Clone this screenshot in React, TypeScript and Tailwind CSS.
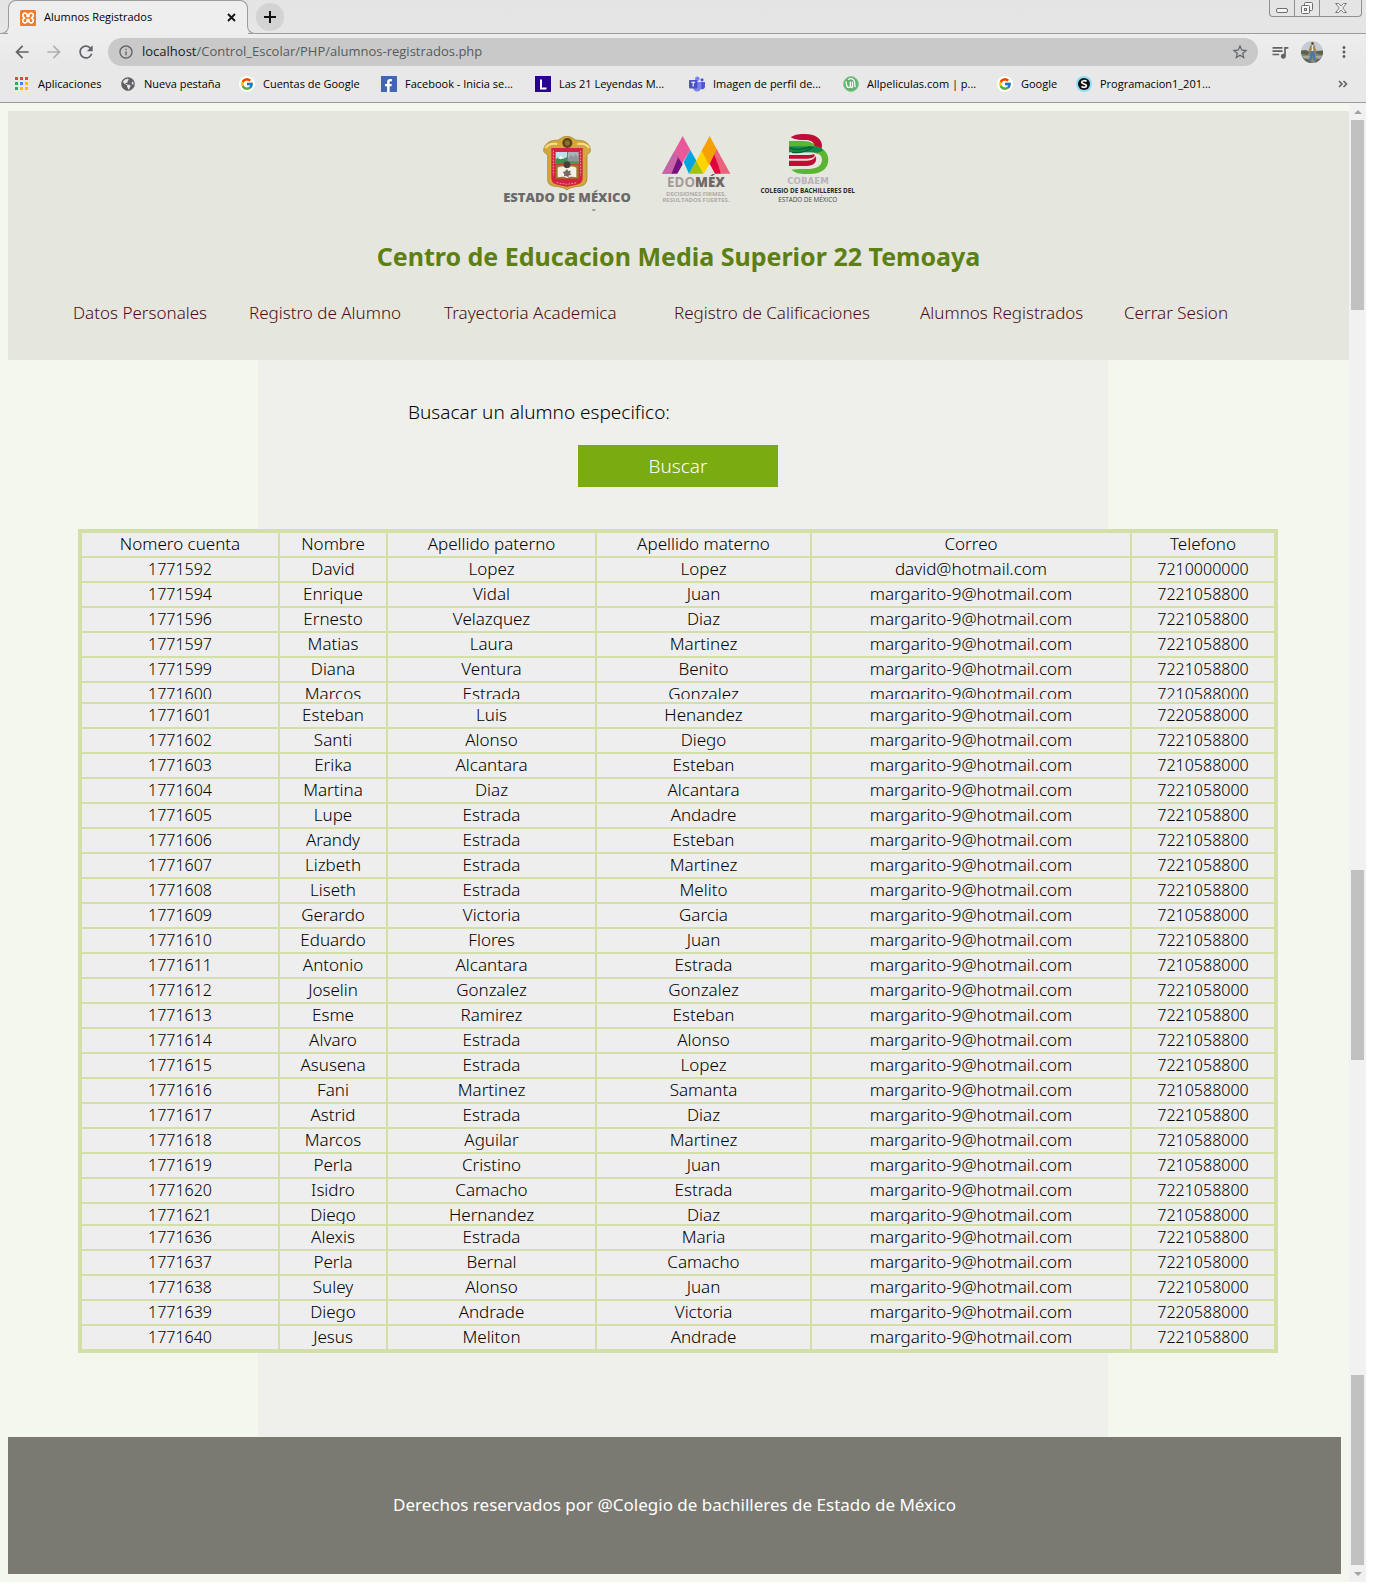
import React from "react";
import {
  MdArrowBack,
  MdArrowForward,
  MdRefresh,
  MdInfoOutline,
  MdStarBorder,
  MdQueueMusic,
  MdMoreVert,
} from "react-icons/md";
import { FcGoogle } from "react-icons/fc";
import { FaFacebookF, FaGlobeAmericas } from "react-icons/fa";

const MAIL = "margarito-9@hotmail.com";

type Row = [string, string, string, string, string, string];

const HEADINGS = ["Nomero cuenta", "Nombre", "Apellido paterno", "Apellido materno", "Correo", "Telefono"];

const ROWS: Row[] = [
  ["1771592", "David", "Lopez", "Lopez", "david@hotmail.com", "7210000000"],
  ["1771594", "Enrique", "Vidal", "Juan", MAIL, "7221058800"],
  ["1771596", "Ernesto", "Velazquez", "Diaz", MAIL, "7221058800"],
  ["1771597", "Matias", "Laura", "Martinez", MAIL, "7221058800"],
  ["1771599", "Diana", "Ventura", "Benito", MAIL, "7221058800"],
  ["1771600", "Marcos", "Estrada", "Gonzalez", MAIL, "7210588000"],
  ["1771601", "Esteban", "Luis", "Henandez", MAIL, "7220588000"],
  ["1771602", "Santi", "Alonso", "Diego", MAIL, "7221058800"],
  ["1771603", "Erika", "Alcantara", "Esteban", MAIL, "7210588000"],
  ["1771604", "Martina", "Diaz", "Alcantara", MAIL, "7221058000"],
  ["1771605", "Lupe", "Estrada", "Andadre", MAIL, "7221058800"],
  ["1771606", "Arandy", "Estrada", "Esteban", MAIL, "7221058800"],
  ["1771607", "Lizbeth", "Estrada", "Martinez", MAIL, "7221058800"],
  ["1771608", "Liseth", "Estrada", "Melito", MAIL, "7221058800"],
  ["1771609", "Gerardo", "Victoria", "Garcia", MAIL, "7210588000"],
  ["1771610", "Eduardo", "Flores", "Juan", MAIL, "7221058800"],
  ["1771611", "Antonio", "Alcantara", "Estrada", MAIL, "7210588000"],
  ["1771612", "Joselin", "Gonzalez", "Gonzalez", MAIL, "7221058000"],
  ["1771613", "Esme", "Ramirez", "Esteban", MAIL, "7221058800"],
  ["1771614", "Alvaro", "Estrada", "Alonso", MAIL, "7221058800"],
  ["1771615", "Asusena", "Estrada", "Lopez", MAIL, "7221058800"],
  ["1771616", "Fani", "Martinez", "Samanta", MAIL, "7210588000"],
  ["1771617", "Astrid", "Estrada", "Diaz", MAIL, "7221058800"],
  ["1771618", "Marcos", "Aguilar", "Martinez", MAIL, "7210588000"],
  ["1771619", "Perla", "Cristino", "Juan", MAIL, "7210588000"],
  ["1771620", "Isidro", "Camacho", "Estrada", MAIL, "7221058800"],
  ["1771621", "Diego", "Hernandez", "Diaz", MAIL, "7210588000"],
  ["1771636", "Alexis", "Estrada", "Maria", MAIL, "7221058800"],
  ["1771637", "Perla", "Bernal", "Camacho", MAIL, "7221058000"],
  ["1771638", "Suley", "Alonso", "Juan", MAIL, "7221058000"],
  ["1771639", "Diego", "Andrade", "Victoria", MAIL, "7220588000"],
  ["1771640", "Jesus", "Meliton", "Andrade", MAIL, "7221058800"],
];

/* Rows that are cut short where two stretches of the list meet. */
const CLIPPED: Record<string, string> = {
  "1771600": "h-4 mb-[3px]",
  "1771621": "h-5",
};

const NAV = [
  "Datos Personales",
  "Registro de Alumno",
  "Trayectoria Academica",
  "Registro de Calificaciones",
  "Alumnos Registrados",
  "Cerrar Sesion",
];

function XamppIcon() {
  return (
    <svg viewBox="0 0 16 16" className="size-4 shrink-0">
      <rect width="16" height="16" rx="1.500" fill="#ee7a2c" />
      <path
        d="M5.200 3.200a2.300 2.300 0 0 0-1 4.400l.3.400-.3.400a2.300 2.300 0 1 0 3 2.700V9.700h1.600v1.400a2.300 2.300 0 1 0 3-2.700l-.3-.4.3-.4a2.300 2.300 0 1 0-3-2.700v1.400H7.200V4.900a2.300 2.300 0 0 0-2-1.700z"
        fill="none"
        stroke="#fff"
        strokeWidth="1.700"
      />
    </svg>
  );
}

function AppsIcon() {
  const colors = ["#ea4335", "#ea4335", "#ea4335", "#34a853", "#4285f4", "#fbbc04", "#34a853", "#fbbc04", "#fbbc04"];
  return (
    <svg viewBox="0 0 16 16" className="size-4">
      {colors.map((c, i) => (
        <rect key={i} x={1 + (i % 3) * 5} y={1 + Math.floor(i / 3) * 5} width="3" height="3" fill={c} />
      ))}
    </svg>
  );
}

function GoogleIcon() {
  return (
    <span className="flex size-4 items-center justify-center rounded-full bg-white">
      <FcGoogle className="size-[14px]" />
    </span>
  );
}

function FacebookIcon() {
  return (
    <span className="flex size-4 items-end justify-end bg-[#4267b2] pr-[2px]">
      <FaFacebookF className="size-[13px] text-white" />
    </span>
  );
}

function LetterLIcon() {
  return (
    <svg viewBox="0 0 16 16" className="size-4">
      <rect width="16" height="16" fill="#2a0094" />
      <path d="M6 3.500v9h5.500" fill="none" stroke="#fff" strokeWidth="2" />
    </svg>
  );
}

function TeamsIcon() {
  return (
    <svg viewBox="0 0 16 16" className="size-4">
      <circle cx="8.300" cy="2.800" r="2.300" fill="#7b83eb" />
      <circle cx="13" cy="3.800" r="1.600" fill="#5059c9" />
      <path d="M11.500 6H16v4.500a2.600 2.600 0 0 1-4.500 1.800z" fill="#5059c9" />
      <path d="M5 6h7.300v5.300A4.200 4.200 0 0 1 8 15.600a4 4 0 0 1-3.600-2.400z" fill="#7b83eb" />
      <rect y="4" width="8.400" height="8.400" rx="0.800" fill="#4b53bc" />
      <path d="M2.200 6.300h4M4.200 6.300v4.200" stroke="#fff" strokeWidth="1.100" />
    </svg>
  );
}

function TorrentIcon() {
  return (
    <svg viewBox="0 0 16 16" className="size-4">
      <circle cx="8" cy="8" r="7.600" fill="#5fb26a" />
      <path
        d="M3 5.400c.5 4 .7 6.200 2.600 6.200s2-2.300 1.700-6M7.400 9.500c.4 1.800 1 2.400 2.100 1.900M5 3.800c3-2 5.600-1 6.300 1.200.7 2.100.2 4.500 1 6.100M9.200 5.600c.6 2 .3 4 .4 5.800"
        fill="none"
        stroke="#fff"
        strokeWidth="1.300"
      />
      <circle cx="8" cy="8" r="7.400" fill="none" stroke="#8cc893" strokeWidth="1" />
    </svg>
  );
}

function SIcon() {
  return (
    <svg viewBox="0 0 16 16" className="size-4">
      <circle cx="8" cy="8" r="8" fill="#8fdcf5" />
      <circle cx="8" cy="8" r="6" fill="#111" />
      <path
        d="M10.500 5.600C9.500 4.300 5.700 4.400 5.700 6.300c0 2 4.700 1.300 4.700 3.400 0 1.900-3.700 2-4.900.7"
        fill="none"
        stroke="#fff"
        strokeWidth="1.700"
      />
    </svg>
  );
}

const BOOKMARKS = [
  { label: "Aplicaciones", icon: <AppsIcon />, width: "w-[106px]" },
  { label: "Nueva pestaña", icon: <FaGlobeAmericas className="size-[14px] text-[#5f6368]" />, width: "w-[119px]" },
  { label: "Cuentas de Google", icon: <GoogleIcon />, width: "w-[142px]" },
  { label: "Facebook - Inicia se...", icon: <FacebookIcon />, width: "w-[154px]" },
  { label: "Las 21 Leyendas M...", icon: <LetterLIcon />, width: "w-[154px]" },
  { label: "Imagen de perfil de...", icon: <TeamsIcon />, width: "w-[154px]" },
  { label: "Allpeliculas.com | p...", icon: <TorrentIcon />, width: "w-[154px]" },
  { label: "Google", icon: <GoogleIcon />, width: "w-[79px]" },
  { label: "Programacion1_201...", icon: <SIcon />, width: "w-[154px]" },
];

function Avatar() {
  return (
    <svg viewBox="0 0 22 22" className="size-[22px]">
      <clipPath id="avatar">
        <circle cx="11" cy="11" r="11" />
      </clipPath>
      <g clipPath="url(#avatar)">
        <rect width="22" height="22" fill="#c3ccd6" />
        <path d="M0 10h22v12H0z" fill="#85897f" />
        <path d="M0 9.500 5 9l4 2-3 3-6-1zM14 10l8-.5V14l-6-1z" fill="#5d6248" />
        <path d="M2 15h7l-2 4H3zM14 15h7l-3 3z" fill="#a9aba3" />
        <path d="M0 17l8 1 3 4H0zM14 19l8-2v5h-8z" fill="#60665c" />
        <circle cx="11.500" cy="2.500" r="1.300" fill="#4a3328" />
        <path d="M9.500 4h4l2 7-1.500.5-.6-2h-4l-.9 2L7 11z" fill="#a68442" />
        <path d="M10.800 4h1.400v6h-1.400z" fill="#e8e4dc" />
        <path d="M9.500 10h4l.7 9h-2l-.7-5-.8 5h-2z" fill="#4a76a8" />
      </g>
    </svg>
  );
}

function WindowControls() {
  return (
    <div className="mr-1 flex h-[17px] rounded-b-[4px] border border-t-0 border-[#8f8f8f] text-[#6e6e6e]">
      <button aria-label="Minimizar" className="flex w-[25px] items-center justify-center border-r border-[#8f8f8f]">
        <svg viewBox="0 0 12 12" className="size-3">
          <rect x="0.500" y="6.500" width="11" height="4" rx="1.500" fill="#f4f4f4" stroke="currentColor" />
        </svg>
      </button>
      <button aria-label="Restaurar" className="flex w-[25px] items-center justify-center border-r border-[#8f8f8f]">
        <svg viewBox="0 0 14 14" className="size-[14px]">
          <rect x="4.500" y="1.500" width="8" height="8" rx="1" fill="#f4f4f4" stroke="currentColor" />
          <rect x="1.500" y="4.500" width="8" height="8" rx="1" fill="#f4f4f4" stroke="currentColor" />
          <rect x="4.500" y="7.500" width="2" height="2" fill="none" stroke="currentColor" />
        </svg>
      </button>
      <button aria-label="Cerrar" className="flex w-[41px] items-center justify-center">
        <svg viewBox="0 0 12 12" className="size-3">
          <path
            d="M.6 1.500h3L6 4l2.400-2.500h3L7.700 6l3.700 4.500h-3L6 8l-2.400 2.500h-3L4.300 6z"
            fill="#f4f4f4"
            stroke="currentColor"
            strokeWidth="0.900"
          />
        </svg>
      </button>
    </div>
  );
}

function BrowserBar() {
  return (
    <div className="bg-[#e8e8e8] font-['Open_Sans',sans-serif] text-[11px] text-black">
      <div className="flex h-[34px] items-start justify-between border-b border-[#9c9c9c] bg-linear-to-b from-[#e4e4e4] to-[#e6e6e6]">
        <div className="flex items-start">
          <div className="ml-2 w-60">
            <div className="flex h-[26px] items-center rounded-t-lg border border-b-0 border-[#9c9c9c] bg-[#eeeeee] px-[11px] pt-2">
              <XamppIcon />
              <span className="ml-2 flex-1 whitespace-nowrap">Alumnos Registrados</span>
              <button aria-label="Cerrar pestaña">
                <svg viewBox="0 0 9 9" className="size-[9px]">
                  <path d="m1 1 7 7M8 1 1 8" stroke="#111" strokeWidth="1.800" />
                </svg>
              </button>
            </div>
            <div className="relative h-2 bg-[#eeeeee]">
              <span className="absolute bottom-0 -left-2 size-[9px] rounded-br-lg border-r border-b border-[#9c9c9c] bg-[#e6e6e6]" />
              <span className="absolute -right-2 bottom-0 size-[9px] rounded-bl-lg border-b border-l border-[#9c9c9c] bg-[#e6e6e6]" />
            </div>
          </div>
          <button
            aria-label="Nueva pestaña"
            className="mt-[3px] ml-2 flex size-7 items-center justify-center rounded-full bg-[#d3d3d3]"
          >
            <svg viewBox="0 0 12 12" className="size-3">
              <path d="M6 0v12M0 6h12" stroke="#111" strokeWidth="2" />
            </svg>
          </button>
        </div>
        <WindowControls />
      </div>

      <div className="flex items-center bg-linear-to-b from-[#eeeeee] to-[#e8e8e8] pt-1 pl-3 text-[#5f6368]">
        <button aria-label="Atrás">
          <MdArrowBack className="size-5" />
        </button>
        <button aria-label="Adelante" className="ml-3 text-[#b0b0b0]">
          <MdArrowForward className="size-5" />
        </button>
        <button aria-label="Recargar" className="ml-3">
          <MdRefresh className="size-5" />
        </button>
        <div className="ml-3 flex h-7 flex-1 items-center rounded-full bg-[#c9c9c9] pr-[9px] pl-[10px]">
          <MdInfoOutline className="size-4" />
          <span className="ml-2 flex-1 text-[13px] text-[#57595c]">
            <span className="text-[#202124]">localhost</span>/Control_Escolar/PHP/alumnos-registrados.php
          </span>
          <button aria-label="Marcador">
            <MdStarBorder className="size-[18px]" />
          </button>
        </div>
        <button aria-label="Multimedia" className="ml-3">
          <MdQueueMusic className="size-5" />
        </button>
        <button aria-label="Perfil" className="ml-[11px]">
          <Avatar />
        </button>
        <button aria-label="Menú" className="mr-[13px] ml-3">
          <MdMoreVert className="size-[18px]" />
        </button>
      </div>

      <div className="flex h-[37px] items-center border-b border-[#9c9c9c] pl-[14px]">
        {BOOKMARKS.map((b) => (
          <a key={b.label} href="#" className={`flex items-center gap-2 whitespace-nowrap ${b.width}`}>
            <span className="flex size-4 shrink-0 items-center justify-center">{b.icon}</span>
            {b.label}
          </a>
        ))}
        <button aria-label="Más marcadores" className="mr-[18px] ml-auto">
          <svg viewBox="0 0 10 8" className="h-2 w-[10px]">
            <path d="m1 1 3 3-3 3M5.500 1l3 3-3 3" fill="none" stroke="#5f6368" strokeWidth="1.600" />
          </svg>
        </button>
      </div>
    </div>
  );
}

function EstadoLogo() {
  return (
    <svg viewBox="0 0 480 300" className="h-[100px] w-40" role="img" aria-label="Estado de México">
      <path
        d="M231 49c12 0 18 6 26 11 12 2 22 0 33 8 8 6 12 15 11 26-2 7-8 7-10 12v70c0 10-5 18-14 21-15 4-33 2-46 13-13-11-31-9-46-13-9-3-12-11-12-21v-70c-3-5-9-5-12-12-1-11 4-20 13-26 10-8 20-6 31-8 8-5 14-11 26-11z"
        fill="#d4a73a"
        stroke="#a07c2a"
        strokeWidth="2"
      />
      <path d="M166 84c8-12 22-14 36-12M298 84c-8-12-22-14-36-12" fill="none" stroke="#f5e08a" strokeWidth="6" />
      <path d="M184 84h94v88c0 14-6 20-18 22l-29 6-29-6c-12-2-18-8-18-22z" fill="#d0243f" />
      <path d="M190 92v74M272 92v74M200 188l31 5 31-5" fill="none" stroke="#f0a0a0" strokeWidth="3" strokeDasharray="5 4" />
      <circle cx="232" cy="69" r="15" fill="#5d4216" />
      <circle cx="232" cy="69" r="8" fill="#8b6d2c" />
      <path d="M197 96h34v36h-34z" fill="#bfe0ee" />
      <path d="M233 96h33v36h-33z" fill="#aab3b8" />
      <path d="m197 118 12-9 10 8 12-6v21h-34z" fill="#3e8e4f" />
      <path d="m203 114 8-7 8 7-7 4z" fill="#fff" />
      <path d="m233 116 10-12 8 7 6-9 9 14v16h-33z" fill="#8d979b" />
      <path d="M233 124h33v8h-33z" fill="#4a9a4e" />
      <path d="M197 134h69v42h-69z" fill="#9c7a2a" />
      <path d="M203 143c10-5 20-4 28 2 8-6 18-7 28-2v29c-10-3-20-3-28 2-8-5-18-5-28-2z" fill="#f3f0e8" />
      <circle cx="231" cy="134" r="10" fill="#4a4038" />
      <path d="m231 147 4 6 8-1-3 7 5 6-8 1-2 6-6-4-7 1 1-7-5-5 7-3z" fill="#7c6a62" />
      <text x="231" y="246" textAnchor="middle" fontSize="39" fill="#6a6a6a" className="font-['Open_Sans'] font-extrabold">
        ESTADO DE MÉXICO
      </text>
      <path d="M307 270h9" stroke="#555" strokeWidth="3" />
    </svg>
  );
}

function EdomexLogo() {
  return (
    <svg viewBox="480 0 300 300" className="size-[100px]" role="img" aria-label="Edomex">
      <path d="m516 161 37-67 22 20-28 47z" fill="#c565a8" />
      <path d="M578 48 553 94l22 39 26-43z" fill="#e65a9c" />
      <path d="m562 109 16 24-16 28h-18z" fill="#75107f" />
      <path d="m553 94 11 19-20 48h-28z" fill="#c565a8" />
      <path d="m601 90-20 36 16 35 22-39z" fill="#00a5df" />
      <path d="m619 122 22 39h-44z" fill="#9fc30c" />
      <path d="m635 92-16 30 22 39 18-30z" fill="#ffd400" />
      <path d="m659 48-24 44 22 42 25-44z" fill="#f5a104" />
      <path d="m680 87 41 74h-28l-20-60z" fill="#ea6379" />
      <path d="m673 103-14 28 16 30h18l-8-26z" fill="#e4003d" />
      <text x="618" y="201" textAnchor="middle" fontSize="40" className="font-['Open_Sans'] font-extrabold">
        <tspan fill="#a39b99" className="font-bold">EDO</tspan>
        <tspan fill="#6d6769">MÉX</tspan>
      </text>
      <text x="618" y="228" textAnchor="middle" fontSize="18" fill="#b0a9a7" className="font-['Open_Sans'] font-bold">
        DECISIONES FIRMES,
      </text>
      <text x="618" y="247" textAnchor="middle" fontSize="18" fill="#b0a9a7" className="font-['Open_Sans'] font-bold">
        RESULTADOS FUERTES.
      </text>
    </svg>
  );
}

function CobaemLogo() {
  return (
    <svg viewBox="780 0 420 300" className="h-[100px] w-[140px]" role="img" aria-label="Cobaem">
      <path d="M902 52c14-10 28-10 42-10 32 0 52 14 52 35 0 11-6 19-14 24l-24-12c10-2 14-6 14-12 0-12-12-17-28-17-16 0-30 0-42-8z" fill="#c10d33" />
      <path d="M897 63h36c22 0 36 4 42 15h-78z" fill="#5cb531" />
      <path d="M897 79h76c25 3 42 18 42 40 0 28-24 43-58 43-22 0-40-1-53-13 16-3 30-2 46-2 26 0 46-8 46-28 0-14-12-22-34-22h-65z" fill="#5cb531" />
      <path d="M897 79h76c12 1 20 5 27 11-8 8-20 9-36 7h-67z" fill="#0c8a4a" />
      <path d="M900 84c20 8 44 4 62-4M906 97c24 4 46-4 64-17" fill="none" stroke="#075b36" strokeWidth="4" />
      <path d="M897 105h54c10 0 16-1 22-3 4 8-6 14-20 14h-56z" fill="#c10d33" />
      <path d="M897 122h54c14 0 22-6 26-14 6 18-6 30-28 30h-52z" fill="#c10d33" />
      <text x="954" y="191" textAnchor="middle" fontSize="26" fill="#b9b3bb" className="font-['DejaVu_Sans'] font-bold">
        COBAEM
      </text>
      <text x="953" y="219" textAnchor="middle" fontSize="19" fill="#2a2a2a" className="font-['Open_Sans'] font-bold">
        COLEGIO DE BACHILLERES DEL
      </text>
      <text x="953" y="246" textAnchor="middle" fontSize="19" fill="#444" className="font-['Open_Sans'] font-normal">
        ESTADO DE MÉXICO
      </text>
    </svg>
  );
}

function Scrollbar() {
  return (
    <div aria-hidden="true" className="flex w-[17px] shrink-0 flex-col bg-[#f1f1f1] px-[2px]">
      <div className="flex h-[17px] items-center justify-center">
        <span className="border-x-[4px] border-b-[4px] border-x-transparent border-b-[#a3a3a3]" />
      </div>
      <div className="h-[190px] bg-[#c1c1c1]" />
      <div className="flex-[560]" />
      <div className="h-[190px] bg-[#c1c1c1]" />
      <div className="flex-[315]" />
      <div className="h-[190px] bg-[#c1c1c1]" />
      <div className="flex h-[17px] items-center justify-center">
        <span className="border-x-[4px] border-t-[4px] border-x-transparent border-t-[#a3a3a3]" />
      </div>
    </div>
  );
}

function StudentTable() {
  return (
    <table className="w-full table-fixed border-separate border-spacing-[2px] border-2 border-[#d2e0a8] bg-[#d2e0a8] text-center text-[17px]">
      <colgroup>
        <col className="w-[196px]" />
        <col className="w-[106px]" />
        <col className="w-[207px]" />
        <col className="w-[213px]" />
        <col />
        <col className="w-[142px]" />
      </colgroup>
      <thead>
        <tr>
          {HEADINGS.map((h) => (
            <th key={h} className="bg-[#eeeeee] p-0 font-light">
              <div className="h-[23px] leading-[22px]">{h}</div>
            </th>
          ))}
        </tr>
      </thead>
      <tbody>
        {ROWS.map((row) => (
          <tr key={row[0]}>
            {row.map((cell, i) => (
              <td key={i} className={`bg-[#eeeeee] p-0 ${i === 0 || i === 5 ? "text-base" : ""}`}>
                <div className={`overflow-hidden leading-[22px] ${CLIPPED[row[0]] ?? "h-[23px]"}`}>{cell}</div>
              </td>
            ))}
          </tr>
        ))}
      </tbody>
    </table>
  );
}

export default function App() {
  return (
    <div className="bg-white pr-[10px] pb-[2px]">
      <BrowserBar />
      <div className="flex font-['Noto_Sans',sans-serif] font-light text-black">
        <div className="min-w-0 flex-1 bg-[#f4f7ed] py-2 pl-2">
          <header className="bg-[#e5e6de] pt-[9px] pb-[35px]">
            <div className="flex justify-center pl-[22px]">
              <EstadoLogo />
              <EdomexLogo />
              <CobaemLogo />
            </div>
            <h1 className="mt-5 text-center text-[25px] leading-8 font-bold text-[#5c8011]">
              Centro de Educacion Media Superior 22 Temoaya
            </h1>
            <nav className="mt-[29px] pl-[65px]">
              <ul className="grid grid-cols-[176fr_195fr_230fr_246fr_204fr_225fr] text-[17px] leading-6 whitespace-nowrap text-[#4d0a14]">
                {NAV.map((n) => (
                  <li key={n}>
                    <a href="#">{n}</a>
                  </li>
                ))}
              </ul>
            </nav>
          </header>

          <main>
            <section className="mr-[241px] ml-[250px] bg-[#efefeb] pt-10 pb-[42px] text-[19px]">
              <p className="pl-[150px] leading-6">Busacar un alumno especifico:</p>
              <button className="mt-[21px] ml-[320px] block h-[42px] w-[200px] bg-[#7aab10] text-white">Buscar</button>
            </section>
            <div className="mr-[71px] ml-[70px]">
              <StudentTable />
            </div>
            <div className="mr-[241px] ml-[250px] h-[84px] bg-[#efefeb]" />
          </main>

          <footer className="mr-2 bg-[#7a7a73] pt-14 pb-[57px] text-center text-[17px] leading-6 font-normal text-white">
            Derechos reservados por @Colegio de bachilleres de Estado de México
          </footer>
        </div>
        <Scrollbar />
      </div>
    </div>
  );
}
